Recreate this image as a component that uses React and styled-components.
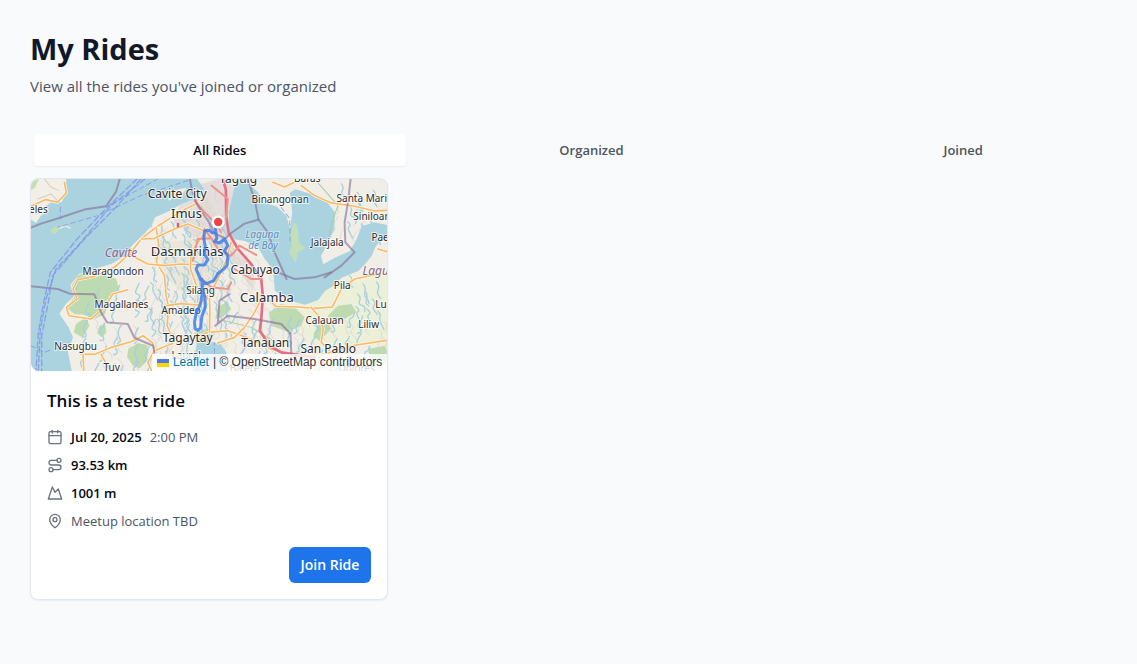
import React, { useState } from "react";
import styled, { createGlobalStyle } from "styled-components";
import { Calendar, Route, Mountain, MapPin } from "lucide-react";

const GlobalStyle = createGlobalStyle`
  *, *::before, *::after { box-sizing: border-box; }
  html { background: #f9fafc; }
  body {
    margin: 0;
    overflow-x: hidden;
    font-family: "Segoe UI", "Open Sans", "Noto Sans", sans-serif;
    font-size: 13px;
    line-height: 20px;
    color: #030712;
  }
  h1, h2, p, ul { margin: 0; padding: 0; }
  button { font: inherit; border: 0; cursor: pointer; }
`;

const Page = styled.main`
  width: calc(100% + 16px);
  padding: 32px 0 32px 30px;
`;

const Header = styled.header`
  margin-bottom: 32px;
`;

const PageTitle = styled.h1`
  font-size: 29px;
  line-height: 34px;
  font-weight: 700;
  color: #111827;
`;

const Subtitle = styled.p`
  margin-top: 8px;
  font-size: 15px;
  line-height: 24px;
  color: #4b5563;
`;

const TabList = styled.div`
  display: grid;
  grid-template-columns: repeat(3, 1fr);
  padding: 4px;
`;

const Tab = styled.button`
  height: 32px;
  border-radius: 4px;
  font-weight: 600;
  color: ${(p) => (p.$active ? "#030712" : "#4b5563")};
  background: ${(p) => (p.$active ? "#ffffff" : "transparent")};
  box-shadow: ${(p) => (p.$active ? "0 1px 2px rgba(0, 0, 0, 0.06)" : "none")};
`;

const RideGrid = styled.section`
  display: grid;
  grid-template-columns: repeat(3, 1fr);
  gap: 24px;
  margin-top: 8px;
`;

const Card = styled.article`
  background: #ffffff;
  border: 1px solid #e2e8f0;
  border-radius: 8px;
  overflow: hidden;
  box-shadow: 0 1px 2px rgba(0, 0, 0, 0.06);
`;

const MapFrame = styled.div`
  position: relative;
  height: 192px;
  overflow: hidden;
  border-radius: 8px 8px 0 8px;
`;

const MapDrawing = styled.svg`
  display: block;
  width: 100%;
  height: 100%;
  font-family: "Noto Sans", sans-serif;
`;

const Attribution = styled.div`
  position: absolute;
  right: 0;
  bottom: 0;
  display: flex;
  align-items: center;
  gap: 4px;
  padding: 0 5px;
  background: rgba(255, 255, 255, 0.8);
  color: #333333;
  font-family: "Liberation Sans", Arial, sans-serif;
  font-size: 12px;
  line-height: 17px;
  white-space: nowrap;
`;

const LeafletLink = styled.a`
  display: inline-flex;
  align-items: center;
  gap: 4px;
  color: #0078a8;
  text-decoration: none;
`;

const CardBody = styled.div`
  display: flex;
  flex-direction: column;
  padding: 16px;
`;

const RideTitle = styled.h2`
  margin-bottom: 12px;
  font-size: 17px;
  line-height: 28px;
  font-weight: 600;
`;

const Details = styled.ul`
  display: grid;
  gap: 8px;
  list-style: none;
`;

const Detail = styled.li`
  display: flex;
  align-items: center;
  gap: 8px;
  color: #4b5563;
  svg { color: #6b7280; flex: none; }
`;

const Value = styled.span`
  color: #030712;
  font-weight: 600;
`;

const JoinButton = styled.button`
  align-self: flex-end;
  height: 36px;
  margin-top: 16px;
  padding: 0 12px;
  border-radius: 6px;
  background: #1d74eb;
  color: #ffffff;
  font-size: 14px;
  font-weight: 600;
`;

const MAIN_LAND =
  "M498 0 520 30 492 60 450 76 412 98 372 115 362 140 338 166 302 200 282 230 242 254 190 270 145 284 118 318 130 350 105 374 85 404 112 444 126 475 110 515 122 576H1080V0Z";
const LAKE =
  "M85 9 75 50 62 110 60 165 80 190 110 195 150 215 170 250 194 278 200 344 240 372 290 386 330 372 350 345 375 330 400 305 450 285 470 265 490 240 500 215 518 190 550 195V150L500 140 460 150 445 190 425 225 380 245 345 265 338 240 360 200 378 160 380 110 350 70 310 55 262 40 245 50 252 110 245 160 235 120 205 92 165 80 150 50 130 30 118 9Z";

const FORESTS = [
  "M140 290 180 270 220 285 255 300 266 335 235 355 222 405 190 420 160 408 130 405 105 385 130 355 122 320Z",
  "M135 435 165 415 175 440 155 475 128 460Z",
  "M205 440 222 435 226 460 212 475 198 462Z",
  "M288 534 292 508 308 500 320 492 348 498 352 520 345 548 325 568 306 560Z",
  "M714 400 750 375 790 385 820 415 810 440 770 458 720 440Z",
  "M890 410 920 380 960 375 975 400 930 425 900 440Z",
  "M560 384 588 368 600 390 575 414 552 420Z",
  "M1010 510 1060 500 1080 548 1020 555Z",
  "M490 462 530 448 552 465 530 490 495 495Z",
  "M858 440 890 425 900 450 865 485 846 472Z",
];

const ROADS = [
  "M0 82 45 62 80 70 106 42 100 10",
  "M500 72 460 92 420 116 376 144 330 180 300 220 250 265 190 292 140 302 126 330 138 360 106 385 114 410 180 420 220 385 245 345 290 332",
  "M150 525 190 526 240 505 300 488 336 470 365 492 370 515 420 495 480 480 530 460 590 455 660 480",
  "M156 525 158 576M210 526 235 570M370 515 350 550 362 576",
  "M375 145 383 200 376 250 400 290 405 350 412 382 408 440 430 490",
  "M295 226 350 255 400 260 450 255 510 258",
  "M405 380 450 374 500 378 530 350",
  "M528 150 508 180 480 220 478 270 500 330 535 365",
  "M600 190 585 245 560 300 535 348 536 400 535 460",
  "M725 10 760 24 790 10M810 20 850 50 900 72 970 82 1030 96 1080 94",
  "M1040 210 1080 222M710 360 735 382 800 384 850 388 903 384 930 330 970 300 1040 285",
  "M838 384 862 410 876 448 870 490 900 520 900 576",
  "M690 360 670 400 640 445 610 475 560 492M660 480 720 510 790 532 880 525 960 500 1080 482",
  "M330 180 370 178 430 150 470 135 520 156",
];

const RED_ROADS = [
  "M575 0 584 32 585 110 592 160 620 210 660 255 690 300 695 352 690 420 686 455 715 500 750 520 850 535",
  "M541 20 590 60 584 120M490 65 520 100 550 130 570 160",
  "M520 150 545 185 560 210 600 230 625 200 675 228",
  "M540 178 500 180 485 245M690 300 660 300 610 270",
  "M512 300 540 325 590 330 600 310",
];

const BORDERS = [
  "M266 0 255 38 225 82 160 92 82 118 30 134 0 146",
  "M476 0 484 40 500 80 530 125 552 164 583 178 600 162 640 134 682 122 672 70 650 0",
  "M682 122 710 160 730 220 766 300M880 295 930 260 970 220 942 190 940 130 950 70 958 0",
  "M0 322 80 330 116 344 190 346 210 400 228 430 290 435 310 476 366 500 370 520",
  "M552 440 590 410 670 420 750 435 778 464 780 524",
  "M560 430 565 365 595 345M740 280 790 300 850 295 900 280",
];

const LABELS = [
  ["Taguig", 621, 12, 36], ["Cavite City", 438, 57, 36], ["Imus", 466, 117, 39],
  ["Dasmariñas", 468, 230, 39], ["Cabuyao", 672, 285, 36], ["Calamba", 707, 369, 39],
  ["Tagaytay", 470, 489, 36], ["Tanauan", 702, 504, 36], ["San Pablo", 891, 522, 36],
  ["eles", 22, 103, 30], ["Baras", 828, 9, 30], ["Binangonan", 747, 73, 30],
  ["Santa Maria", 1000, 68, 30], ["Siniloan", 1022, 123, 30], ["Paete", 1060, 186, 30],
  ["Jalajala", 888, 202, 30], ["Maragondon", 246, 288, 30], ["Magallanes", 271, 386, 30],
  ["Silang", 508, 346, 30], ["Amadeo", 450, 406, 30], ["Pila", 933, 331, 30],
  ["Calauan", 880, 434, 30], ["Liliw", 1012, 448, 30], ["Lumban", 1090, 388, 30],
  ["Nasugbu", 134, 514, 30], ["Tuy", 242, 576, 30], ["Laurel", 465, 540, 30],
  ["Balete", 640, 578, 30], ["Dolores", 976, 578, 30],
];

const REGIONS = [
  ["Cavite", 270, 235, 36, "#8d618b"],
  ["Laguna", 1054, 288, 36, "#8d618b"],
  ["Laguna", 693, 176, 30, "#5b8fc0"],
  ["de Boy", 695, 210, 30, "#5b8fc0"],
];

/* Small waterways and lanes, laid out on a jittered lattice over the land. */
function meanders(startX, startY, cols, rows, stepX, stepY, lean) {
  const paths = [];
  for (let r = 0; r < rows; r += 1) {
    for (let c = 0; c < cols; c += 1) {
      const n = (c * 37 + r * 53 + c * r * 11) % 29;
      const x = startX + c * stepX + n;
      const y = startY + r * stepY + ((n * 7) % 31);
      paths.push(
        `M${x} ${y}q${lean + (n % 7)} ${6 + (n % 7)} ${lean - 2} ${14 + (n % 9)}t${(n % 13) - 4} ${12 + (n % 11)}t${lean} ${8 + (n % 13)}`
      );
    }
  }
  return paths.join("");
}

const STREAMS =
  meanders(350, 110, 9, 7, 27, 50, 9) +
  meanders(150, 300, 7, 5, 50, 58, -7) +
  meanders(620, 400, 9, 4, 46, 50, -8) +
  meanders(930, 15, 4, 3, 40, 52, 7) +
  meanders(955, 290, 4, 3, 32, 42, 8);
const LANES =
  meanders(370, 90, 9, 9, 27, 48, -9) +
  meanders(480, 5, 5, 8, 24, 37, 11) +
  meanders(190, 420, 6, 3, 50, 52, 12) +
  meanders(600, 220, 4, 6, 28, 48, 12) +
  meanders(660, 420, 12, 3, 36, 50, 11) +
  meanders(840, 40, 6, 3, 38, 44, -8);

const ROUTE =
  "M553 150 557 178 550 188 565 192 580 180 590 200 580 215 590 232 588 258 578 270 560 284 548 305 525 314 508 302 495 270 500 258 520 258 530 242 520 226 522 200 518 180 520 156 535 154 543 161 555 162M512 300 514 340 508 375 495 402 490 430 492 449 500 454 508 447 512 412 522 385 521 352 512 330 516 310";

function RouteMap() {
  return (
    <MapDrawing
      viewBox="0 0 1068 576"
      preserveAspectRatio="xMidYMid slice"
      role="img"
      aria-label="Ride route from Imus to Tagaytay"
      fill="none"
      strokeLinejoin="round"
      strokeLinecap="round"
    >
      <defs>
        <clipPath id="land"><path d={MAIN_LAND} /></clipPath>
      </defs>
      <rect x="-10" width="1090" height="576" fill="#aad3df" />
      <path d="M-10 0H106L104 40 92 70 64 68 46 80 54 95 30 110 15 132 -10 115Z" fill="#f2efe6" />
      <path d="M0 0H24L12 26 0 34Z" fill="#c5dfb4" />
      <path d="M40 0 60 25 84 35M20 60 60 45 84 70" stroke="#d9ccc0" strokeWidth="3" />
      <path d="M62 148 78 142 84 152 72 166 60 158Z" fill="#c5dfb4" />
      <path d="M84 148 105 141 118 148" stroke="#e7eee6" strokeWidth="4" />
      <path d={MAIN_LAND} fill="#f0eee6" />
      <path d="M415 62 440 35 462 30M462 30 440 56" stroke="#f0eee6" strokeWidth="6" />
      <g clipPath="url(#land)">
        <path d="M460 30 560 0 620 0 590 110 590 190 670 270 665 340 610 250 540 190 480 170 430 130Z" fill="#e3dedb" />
        <path d="M380 190 500 180 570 250 540 330 450 340 400 290Z" fill="#eae7da" />
        <path d="M800 330 960 300 1080 270V500H850L780 420Z" fill="#edf0d9" />
        {FORESTS.map((d) => <path key={d} d={d} fill="#bddab1" />)}
        <path d={LANES} stroke="#d9d1c9" strokeWidth="2" />
        <path d={STREAMS} stroke="#a6d0dd" strokeWidth="4" />
      </g>
      <path d={LAKE} transform="translate(531 -9)" fill="#aad3df" />
      <path d="M497 494 525 484 570 496 586 520 588 576H485Z" fill="#aad3df" />
      <path d="M786 131 776 175 782 200 774 218 793 252 801 218 823 207 804 193 798 140Z" fill="#c3dfb8" />
      <path d="M580 425 660 445 750 500M850 0 920 80 902 130 890 190" stroke="#a8cda0" strokeWidth="3" />

      {ROADS.map((d) => (
        <g key={d}>
          <path d={d} stroke="#fff7e5" strokeWidth="9" />
          <path d={d} stroke="#f5ba70" strokeWidth="5" />
        </g>
      ))}
      {RED_ROADS.map((d, i) => (
        <path key={d} d={d} stroke={i === 0 ? "#e76d84" : "#ef9388"} strokeWidth={i === 0 ? 8 : 6} />
      ))}
      {BORDERS.map((d) => (
        <path key={d} d={d} stroke="#846b96" strokeOpacity="0.6" strokeWidth="6" />
      ))}
      <g stroke="#7d8fe8" strokeOpacity="0.75" strokeWidth="4" strokeDasharray="18 9">
        <path d="M342 0 240 80 150 190 75 270 45 360 28 450 22 576" />
        <path d="M318 0 226 88 140 178 58 280 38 370 22 460 15 576" />
        <path d="M330 0 250 90 160 180 65 290 50 380 32 470 32 576" />
      </g>
      <g stroke="#7d8fe8" strokeOpacity="0.7" strokeWidth="3" strokeDasharray="14 10">
        <path d="M470 5 330 50 200 110 80 145M380 0 230 82M88 85V120M0 500 40 520 65 510" />
        <path d="M750 86 775 118 777 185M550 570V490" />
      </g>
      <rect x="437" y="132" width="7" height="13" fill="#dd5875" />

      <g textAnchor="middle" fill="#2b2b2b" stroke="#ffffff" strokeOpacity="0.75" strokeWidth="6" paintOrder="stroke">
        {LABELS.map(([name, x, y, size]) => (
          <text key={name} x={x} y={y} fontSize={size}>{name}</text>
        ))}
        {REGIONS.map(([name, x, y, size, color]) => (
          <text key={name + x} x={x} y={y} fontSize={size} fill={color} fontStyle="italic" strokeOpacity="0.4">{name}</text>
        ))}
      </g>

      <path d={ROUTE} stroke="#3478ed" strokeOpacity="0.8" strokeWidth="9" />
      <circle cx="561" cy="129" r="16" fill="#ef4444" stroke="#ffffff" strokeWidth="7" />
    </MapDrawing>
  );
}

function UkraineFlag() {
  return (
    <svg width="12" height="8" viewBox="0 0 12 8" aria-hidden="true">
      <path fill="#4c7be1" d="M0 0h12v4H0z" />
      <path fill="#ffd500" d="M0 4h12v4H0z" />
    </svg>
  );
}

const TABS = ["All Rides", "Organized", "Joined"];

export default function App() {
  const [tab, setTab] = useState(TABS[0]);
  return (
    <>
      <GlobalStyle />
      <Page>
        <Header>
          <PageTitle>My Rides</PageTitle>
          <Subtitle>View all the rides you've joined or organized</Subtitle>
        </Header>
        <TabList role="tablist" aria-label="Rides">
          {TABS.map((name) => (
            <Tab
              key={name}
              type="button"
              role="tab"
              aria-selected={tab === name}
              $active={tab === name}
              onClick={() => setTab(name)}
            >
              {name}
            </Tab>
          ))}
        </TabList>
        <RideGrid>
          <Card>
            <MapFrame>
              <RouteMap />
              <Attribution>
                <LeafletLink href="#leaflet"><UkraineFlag />Leaflet</LeafletLink>
                <span>| © OpenStreetMap contributors</span>
              </Attribution>
            </MapFrame>
            <CardBody>
              <RideTitle>This is a test ride</RideTitle>
              <Details>
                <Detail>
                  <Calendar size={16} />
                  <Value>Jul 20, 2025</Value>
                  <span>2:00 PM</span>
                </Detail>
                <Detail><Route size={16} /><Value>93.53 km</Value></Detail>
                <Detail><Mountain size={16} /><Value>1001 m</Value></Detail>
                <Detail><MapPin size={16} /><span>Meetup location TBD</span></Detail>
              </Details>
              <JoinButton type="button">Join Ride</JoinButton>
            </CardBody>
          </Card>
        </RideGrid>
      </Page>
    </>
  );
}
